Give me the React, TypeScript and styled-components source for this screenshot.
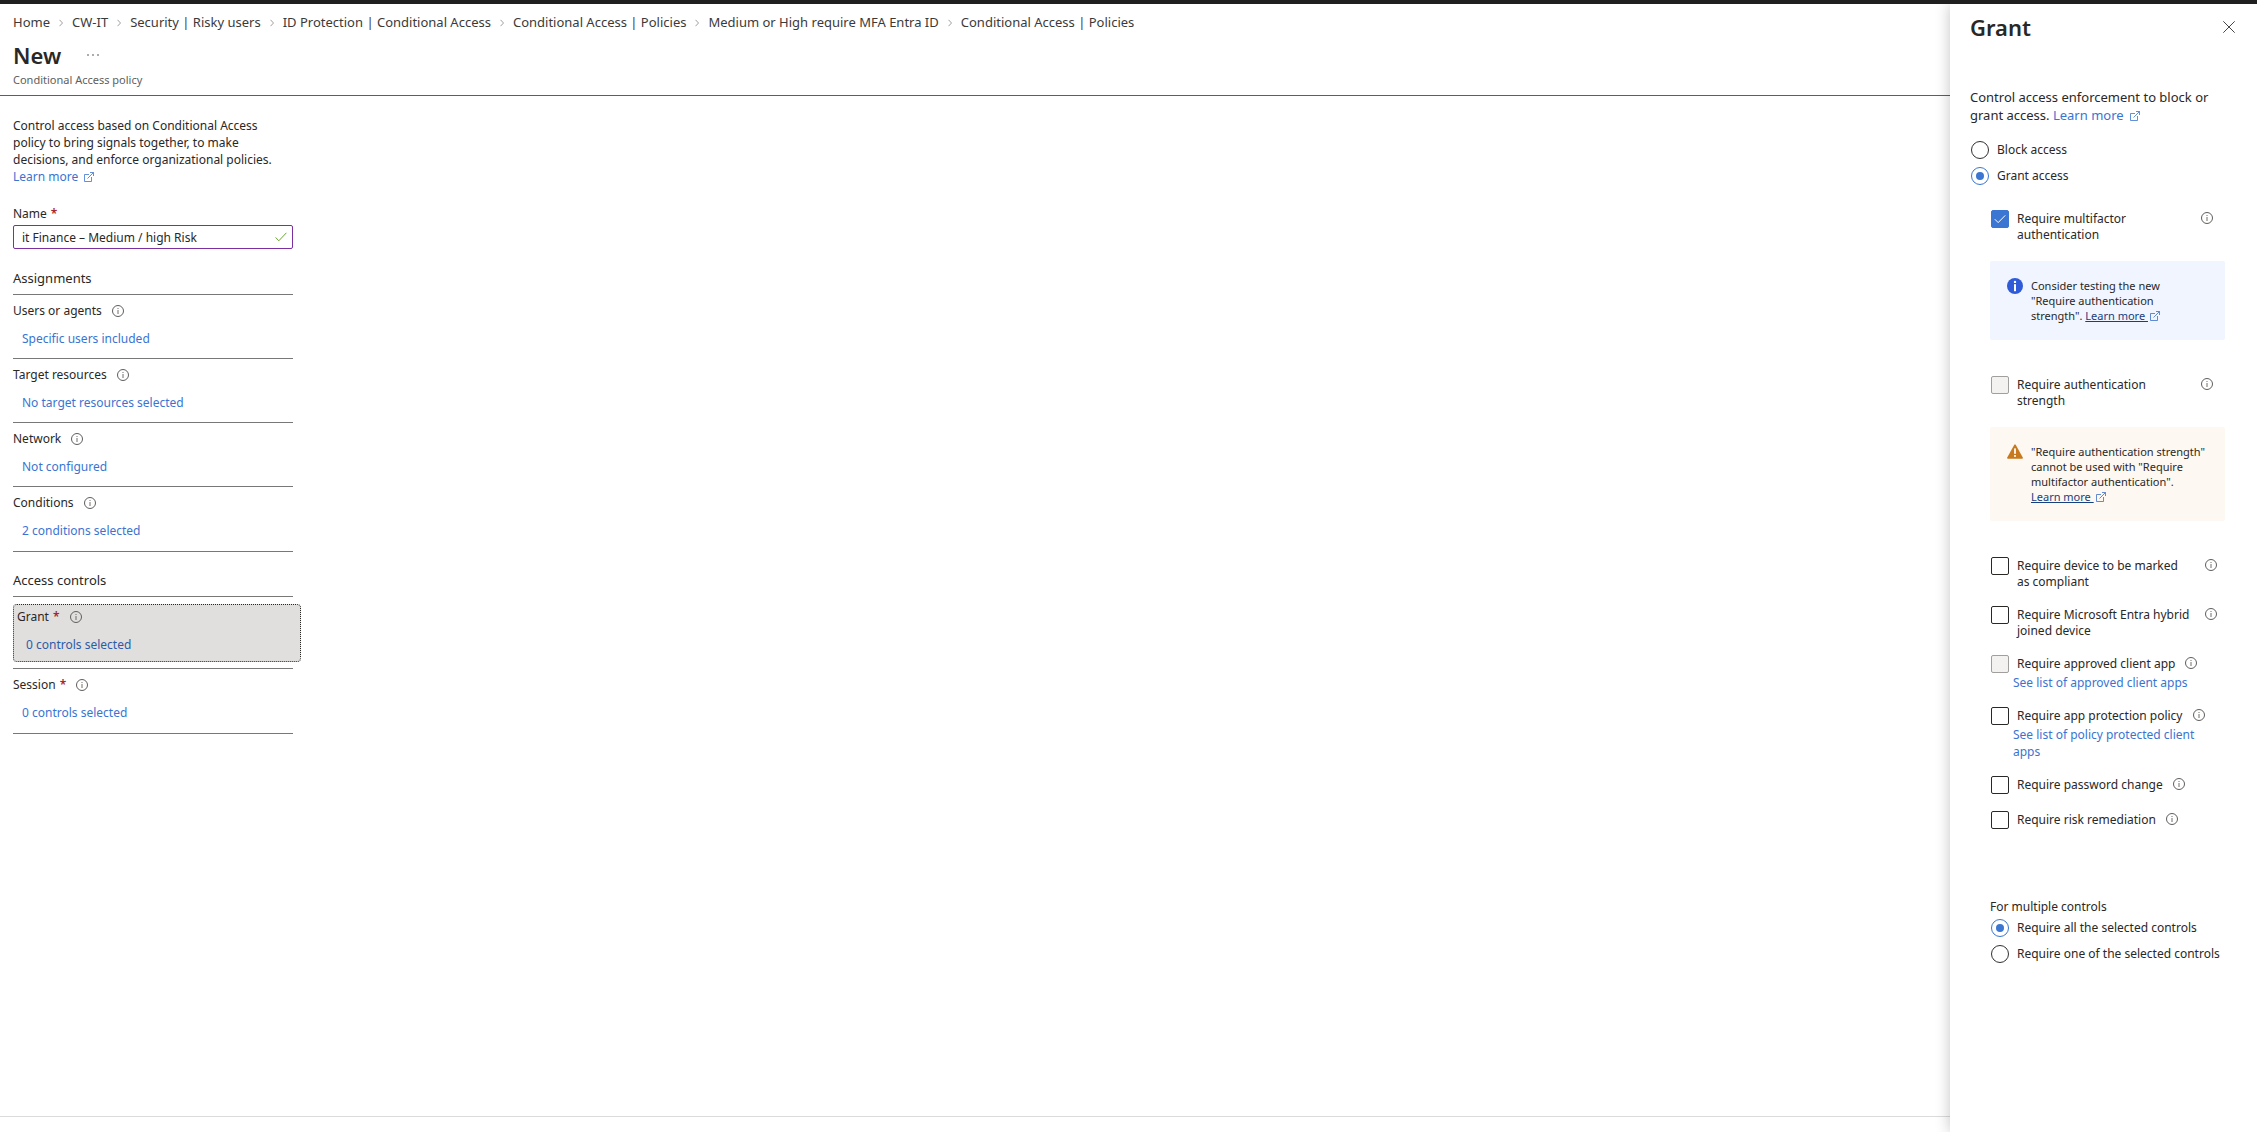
import React, { useState } from 'react';
import styled, { createGlobalStyle, css } from 'styled-components';

const GlobalStyle = createGlobalStyle`
  *, *::before, *::after { box-sizing: border-box; }
  body {
    margin: 0;
    background: #fff;
    color: #292827;
    font-family: "Segoe UI", "Noto Sans", "Open Sans", sans-serif;
    font-size: 12px;
    line-height: 17px;
  }
  input, button { font: inherit; color: inherit; }
`;

const Page = styled.div`
  display: flex;
  flex-direction: column;
  min-height: 100vh;
`;

const TopBar = styled.div`
  flex: none;
  height: 4px;
  background: #1f1f1f;
`;

const Body = styled.div`
  flex: 1;
  display: flex;
`;

/* ---------- main blade ---------- */

const Main = styled.main`
  flex: 1;
  min-width: 0;
  display: flex;
  flex-direction: column;
`;

const Header = styled.header`
  padding: 9px 13px 7px;
  border-bottom: 1px solid #605e5c;
`;

const Breadcrumb = styled.nav`
  ol {
    display: flex;
    flex-wrap: wrap;
    margin: 0;
    padding: 0;
    list-style: none;
    font-size: 13px;
    line-height: 18px;
  }
  li { display: flex; align-items: center; }
  a { color: #3b3a39; text-decoration: none; }
  svg { margin: 2px 9px 0; }
`;

const TitleRow = styled.div`
  display: flex;
  align-items: center;
  gap: 26px;
  margin-top: 8px;
`;

const Title = styled.h1`
  margin: 0;
  font-size: 22px;
  line-height: 32px;
  font-weight: 600;
`;

const IconButton = styled.button`
  display: inline-flex;
  padding: 0;
  border: 0;
  background: none;
  color: #484644;
  cursor: pointer;
`;

const Subtitle = styled.p`
  margin: 0;
  color: #605e5c;
  font-size: 11px;
  line-height: 17px;
`;

const Form = styled.form`
  width: 280px;
  margin: 21px 0 0 13px;
`;

const Intro = styled.p`
  margin: 0;
`;

const Link = styled.a`
  color: #3a74d2;
  text-decoration: none;
  svg { margin-left: 6px; vertical-align: -1px; }
`;

const Required = styled.span`
  color: #a4262c;
  font-weight: 600;
  margin-left: 4px;
`;

const FieldLabel = styled.label`
  display: block;
  margin-top: 20px;
`;

const Field = styled.div`
  display: flex;
  align-items: center;
  height: 24px;
  margin-top: 3px;
  padding: 0 5px 0 8px;
  border: 1px solid #7b2fa0;
  border-radius: 2px;
`;

const FieldInput = styled.input`
  flex: 1;
  min-width: 0;
  padding: 0;
  border: 0;
  outline: 0;
  background: none;
`;

const Section = styled.section`
  margin-top: 20px;
  & + & { margin-top: 19px; }
`;

const SectionTitle = styled.h2`
  margin: 0;
  padding-bottom: 7px;
  border-bottom: 1px solid #7a7876;
  font-size: 13px;
  line-height: 18px;
  font-weight: 400;
`;

const Row = styled.div<{ $active?: boolean }>`
  border-bottom: 1px solid #7a7876;
  padding: ${p => (p.$active ? '7px 0 6px' : '0')};
  &:last-child { padding-bottom: 1px; }
`;

const RowInner = styled.div<{ $active?: boolean }>`
  height: 63px;
  padding-top: 7px;
  ${p => p.$active && css`
    height: 58px;
    width: 288px;
    padding: 3px 3px 0;
    border: 1px dotted #292827;
    border-radius: 4px;
    background: #e1dfdd;
    a { color: #2c5ba8; }
  `}
`;

const RowLabel = styled.div`
  display: flex;
  align-items: center;
`;

const InfoButton = styled.button`
  flex: none;
  display: inline-flex;
  margin-left: 10px;
  padding: 0;
  border: 0;
  background: none;
  color: #605e5c;
`;

const RowValue = styled.div`
  margin-top: 11px;
  padding-left: 9px;
`;

const Footer = styled.footer`
  margin-top: auto;
  height: 16px;
  border-top: 1px solid #dddbd9;
`;

/* ---------- side panel ---------- */

const Panel = styled.aside`
  flex: none;
  width: 307px;
  padding: 7px 22px 0 20px;
  background: #fff;
  box-shadow: 0 0 14px rgba(0, 0, 0, 0.24);
  clip-path: inset(0 0 0 -30px);
`;

const PanelHeader = styled.div`
  display: flex;
  align-items: center;
  justify-content: space-between;
`;

const PanelIntro = styled.p`
  margin: 45px 0 0;
  font-size: 13px;
  line-height: 18px;
`;

const RadioGroup = styled.fieldset`
  display: flex;
  flex-direction: column;
  gap: 8px;
  margin: 0;
  padding: 0 0 0 1px;
  border: 0;
`;

const AccessGroup = styled(RadioGroup)`
  margin-top: 17px;
`;

const Controls = styled.div`
  padding: 0 10px 0 20px;
  margin-top: 25px;
`;

const Choice = styled.label`
  display: flex;
  align-items: flex-start;
  gap: 8px;
  line-height: 16px;
`;

const RadioChoice = styled(Choice)`
  line-height: 18px;
  white-space: nowrap;
`;

const Radio = styled.input`
  appearance: none;
  flex: none;
  display: grid;
  place-items: center;
  width: 18px;
  height: 18px;
  margin: 0;
  border: 1px solid #323130;
  border-radius: 50%;
  &:checked { border-color: #3a76d2; }
  &:checked::after {
    content: "";
    width: 8px;
    height: 8px;
    border-radius: 50%;
    background: #3a76d2;
  }
`;

const Tick = styled.span`
  flex: none;
  display: grid;
  place-items: center;
  width: 18px;
  height: 18px;
  > * { grid-area: 1 / 1; }
  svg { pointer-events: none; color: #fff; }
`;

const Box = styled.input`
  appearance: none;
  width: 18px;
  height: 18px;
  margin: 0;
  border: 1px solid #292827;
  border-radius: 2px;
  &:checked { background: #3a76d2; border-color: #3a76d2; }
  &:disabled { background: #f3f2f1; border-color: #a19f9d; }
`;

const Control = styled.div`
  margin-bottom: 16px;
  padding-left: 1px;
`;

const ControlHead = styled.div`
  display: flex;
  align-items: flex-start;
  min-height: 19px;
  ${InfoButton} { margin-top: 2px; }
`;

const ChoiceText = styled.span<{ $wide?: boolean; $narrow?: boolean }>`
  padding-top: 1px;
  ${p => (p.$narrow || p.$wide ? 'width: 174px;' : 'white-space: nowrap;')}
  ${p => p.$wide && 'margin-right: 4px;'}
`;

const ControlLink = styled.div`
  padding: 0 20px 0 22px;
`;

const Note = styled.div<{ $warning?: boolean }>`
  display: flex;
  align-items: flex-start;
  gap: 8px;
  margin: 18px 0 36px;
  padding: 17px 14px 17px 17px;
  border-radius: 2px;
  background: ${p => (p.$warning ? '#fdf8f1' : '#f0f5ff')};
  font-size: 11px;
  line-height: 15px;
  svg { flex: none; }
`;

const NoteText = styled.p<{ $narrow?: boolean }>`
  margin: 0;
  ${p => p.$narrow && 'padding-right: 36px;'}
`;

const NoteLink = styled.a`
  color: #17407f;
  text-decoration: underline;
  white-space: nowrap;
  svg { margin-left: 2px; color: #3a6fc9; vertical-align: -1px; }
`;

const Multiple = styled.div`
  margin-top: 68px;
`;

const GroupTitle = styled.div`
  margin-bottom: 4px;
`;

/* ---------- icons ---------- */

const Chevron = () => (
  <svg width="4" height="8" viewBox="0 0 4 8" fill="none" stroke="#a19f9d" aria-hidden="true">
    <path d="M0.5 0.8 L3.5 4 L0.5 7.2" />
  </svg>
);

const InfoIcon = () => (
  <svg width="12" height="12" viewBox="0 0 12 12" fill="none" aria-hidden="true">
    <circle cx="6" cy="6" r="5.5" stroke="currentColor" />
    <path d="M6 5v4" stroke="currentColor" strokeWidth="0.9" />
    <path d="M6 3v1" stroke="currentColor" strokeWidth="0.9" />
  </svg>
);

const External = () => (
  <svg width="10" height="10" viewBox="0 0 10 10" fill="none" stroke="currentColor" strokeWidth="0.8" aria-hidden="true">
    <path d="M5 2.5H0.5V9.5H7.5V5" />
    <path d="M3.5 6.5L9.4 0.6M6 0.5H9.5V4" />
  </svg>
);

const FilledInfo = () => (
  <svg width="16" height="16" viewBox="0 0 16 16" aria-hidden="true">
    <circle cx="8" cy="8" r="8" fill="#2f5bd8" />
    <circle cx="8" cy="3.9" r="1.2" fill="#fff" />
    <rect x="7" y="6.2" width="2" height="7" fill="#fff" />
  </svg>
);

const Warning = () => (
  <svg width="16" height="15" viewBox="0 0 16 15" aria-hidden="true">
    <path d="M7.2 0.9Q8 -0.3 8.8 0.9L15.8 13.4Q16.3 14.7 15 14.8H1Q-0.3 14.7 0.2 13.4Z" fill="#c8781e" />
    <rect x="7.1" y="4.4" width="1.8" height="5.4" fill="#fff" />
    <rect x="7.1" y="11" width="1.8" height="1.8" fill="#fff" />
  </svg>
);

const Info = ({ about }: { about: string }) => (
  <InfoButton type="button" aria-label={`More about ${about}`}><InfoIcon /></InfoButton>
);

const LearnMore = () => <Link href="#">Learn more<External /></Link>;
const NoteLearnMore = () => <NoteLink href="#">Learn more <External /></NoteLink>;

/* ---------- parts ---------- */

const crumbs = [
  'Home', 'CW-IT', 'Security | Risky users', 'ID Protection | Conditional Access',
  'Conditional Access | Policies', 'Medium or High require MFA Entra ID', 'Conditional Access | Policies',
];

const assignments = [
  ['Users or agents', 'Specific users included'],
  ['Target resources', 'No target resources selected'],
  ['Network', 'Not configured'],
  ['Conditions', '2 conditions selected'],
];

type SettingProps = { label: string; value: string; required?: boolean; active?: boolean };

const Setting = ({ label, value, required, active }: SettingProps) => (
  <Row $active={active}>
    <RowInner $active={active}>
      <RowLabel>
        {label}{required && <Required>*</Required>}
        <Info about={label} />
      </RowLabel>
      <RowValue><Link href="#">{value}</Link></RowValue>
    </RowInner>
  </Row>
);

type GrantProps = {
  label: string; wide?: boolean; narrow?: boolean; checked?: boolean; disabled?: boolean; link?: string;
};

const GrantControl = ({ label, wide, narrow, checked, disabled, link }: GrantProps) => {
  const [on, setOn] = useState(!!checked);
  return (
    <Control>
      <ControlHead>
        <Choice>
          <Tick>
            <Box type="checkbox" checked={on} disabled={disabled} onChange={e => setOn(e.target.checked)} />
            {on && (
              <svg width="12" height="10" viewBox="0 0 12 10" fill="none" stroke="currentColor" aria-hidden="true">
                <path d="M0.8 5.2L4.2 8.6L11.2 1.4" />
              </svg>
            )}
          </Tick>
          <ChoiceText $wide={wide} $narrow={narrow}>{label}</ChoiceText>
        </Choice>
        <Info about={label} />
      </ControlHead>
      {link && <ControlLink><Link href="#">{link}</Link></ControlLink>}
    </Control>
  );
};

export default function App() {
  const [name, setName] = useState('it Finance – Medium / high Risk');
  return (
    <>
      <GlobalStyle />
      <Page>
        <TopBar />
        <Body>
          <Main>
            <Header>
              <Breadcrumb aria-label="Breadcrumb">
                <ol>
                  {crumbs.map((c, i) => (
                    <li key={i}>{i > 0 && <Chevron />}<a href="#">{c}</a></li>
                  ))}
                </ol>
              </Breadcrumb>
              <TitleRow>
                <Title>New</Title>
                <IconButton type="button" aria-label="More options">
                  <svg width="12" height="2" viewBox="0 0 12 2" fill="currentColor" aria-hidden="true">
                    <circle cx="1" cy="1" r="0.8" /><circle cx="6" cy="1" r="0.8" /><circle cx="11" cy="1" r="0.8" />
                  </svg>
                </IconButton>
              </TitleRow>
              <Subtitle>Conditional Access policy</Subtitle>
            </Header>

            <Form onSubmit={e => e.preventDefault()}>
              <Intro>
                Control access based on Conditional Access policy to bring signals together, to make
                decisions, and enforce organizational policies. <LearnMore />
              </Intro>
              <FieldLabel htmlFor="policy-name">Name<Required>*</Required></FieldLabel>
              <Field>
                <FieldInput id="policy-name" value={name} onChange={e => setName(e.target.value)} />
                <svg width="12" height="10" viewBox="0 0 12 10" fill="none" stroke="#6aa62e" aria-hidden="true">
                  <path d="M0.6 5.4L3.8 8.8L11.4 0.8" />
                </svg>
              </Field>

              <Section>
                <SectionTitle>Assignments</SectionTitle>
                {assignments.map(([label, value]) => <Setting key={label} label={label} value={value} />)}
              </Section>
              <Section>
                <SectionTitle>Access controls</SectionTitle>
                <Setting label="Grant" value="0 controls selected" required active />
                <Setting label="Session" value="0 controls selected" required />
              </Section>
            </Form>
            <Footer />
          </Main>

          <Panel aria-label="Grant">
            <PanelHeader>
              <Title as="h2">Grant</Title>
              <IconButton type="button" aria-label="Close">
                <svg width="12" height="12" viewBox="0 0 12 12" fill="none" stroke="currentColor" aria-hidden="true">
                  <path d="M0.3 0.3L11.7 11.7M11.7 0.3L0.3 11.7" />
                </svg>
              </IconButton>
            </PanelHeader>
            <PanelIntro>Control access enforcement to block or grant access. <LearnMore /></PanelIntro>
            <AccessGroup aria-label="Access">
              <RadioChoice><Radio type="radio" name="access" />Block access</RadioChoice>
              <RadioChoice><Radio type="radio" name="access" defaultChecked />Grant access</RadioChoice>
            </AccessGroup>

            <Controls>
              <GrantControl label="Require multifactor authentication" narrow checked />
              <Note>
                <FilledInfo />
                <NoteText $narrow>Consider testing the new "Require authentication strength". <NoteLearnMore /></NoteText>
              </Note>
              <GrantControl label="Require authentication strength" narrow disabled />
              <Note $warning>
                <Warning />
                <NoteText>"Require authentication strength" cannot be used with "Require multifactor authentication". <NoteLearnMore /></NoteText>
              </Note>
              <GrantControl label="Require device to be marked as compliant" wide />
              <GrantControl label="Require Microsoft Entra hybrid joined device" wide />
              <GrantControl label="Require approved client app" disabled link="See list of approved client apps" />
              <GrantControl label="Require app protection policy" link="See list of policy protected client apps" />
              <GrantControl label="Require password change" />
              <GrantControl label="Require risk remediation" />

              <Multiple>
                <GroupTitle id="multiple-title">For multiple controls</GroupTitle>
                <RadioGroup aria-labelledby="multiple-title">
                  <RadioChoice><Radio type="radio" name="multiple" defaultChecked />Require all the selected controls</RadioChoice>
                  <RadioChoice><Radio type="radio" name="multiple" />Require one of the selected controls</RadioChoice>
                </RadioGroup>
              </Multiple>
            </Controls>
          </Panel>
        </Body>
      </Page>
    </>
  );
}
